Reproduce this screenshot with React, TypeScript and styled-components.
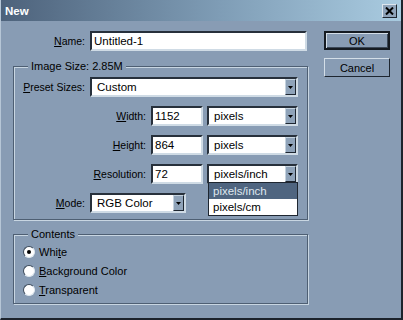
import React from "react";
import styled, { createGlobalStyle } from "styled-components";

const GlobalStyle = createGlobalStyle`
    html, body {
        margin: 0;
        padding: 0;
        background: #889cb4;
    }
    body {
        font-family: "Liberation Sans", Arial, sans-serif;
        font-size: 10.5px;
        color: #000;
    }
`;

const Window = styled.div`
    box-sizing: border-box;
    width: 403px;
    height: 320px;
    background: #889cb4;
    border-left: 1px solid #b6c6d6;
    border-right: 2px solid #1c232c;
    border-bottom: 2px solid #1c232c;
    display: flex;
    flex-direction: column;
    overflow: hidden;
`;

const TitleBar = styled.div`
    height: 21px;
    flex: none;
    display: flex;
    align-items: center;
    justify-content: space-between;
    padding: 0 4px 0 4px;
    background: linear-gradient(to right, #4d627b 0%, #7f9db6 55%, #a9cbe0 100%);
`;

const TitleText = styled.span`
    color: #fff;
    font-weight: bold;
    font-size: 11.5px;
`;

const CloseBtn = styled.div`
    box-sizing: border-box;
    width: 15px;
    height: 14px;
    background: #8fa3b9;
    border: 1px solid;
    border-color: #dde6ee #1e2630 #1e2630 #dde6ee;
    display: flex;
    align-items: center;
    justify-content: center;
`;

const Body = styled.div`
    display: flex;
    padding: 10px 0 0 12px;
    gap: 16px;
`;

const LeftCol = styled.div`
    width: 295px;
    display: flex;
    flex-direction: column;
`;

const RightCol = styled.div`
    display: flex;
    flex-direction: column;
    gap: 8px;
`;

const NameRow = styled.div`
    display: grid;
    grid-template-columns: 73px 217px;
    column-gap: 4px;
    align-items: center;
    height: 20px;
`;

const Label = styled.span<{ $span?: string }>`
    text-align: right;
    white-space: nowrap;
    padding-right: 1px;
    grid-column: ${(p) => p.$span || "auto"};
`;

const Key = styled.span`
    text-decoration: underline;
    text-underline-offset: 1px;
`;

const Sunken = styled.div`
    box-sizing: border-box;
    height: 20px;
    background: #fff;
    border: 2px solid;
    border-color: #27303b #cfdbe5 #cfdbe5 #27303b;
    display: flex;
    align-items: center;
    padding-left: 2px;
    font-size: 11.5px;
    white-space: nowrap;
`;

const Input = styled(Sunken)<{ $span?: string }>`
    grid-column: ${(p) => p.$span || "auto"};
`;

const SelectBox = styled(Sunken)<{ $span?: string; $width?: number }>`
    position: relative;
    padding-right: 0;
    justify-content: space-between;
    grid-column: ${(p) => p.$span || "auto"};
    ${(p) => (p.$width ? `width: ${p.$width}px; justify-self: start;` : "")}
`;

const SelectText = styled.span`
    padding-left: 3px;
`;

const ArrowBtn = styled.div`
    box-sizing: border-box;
    width: 11px;
    height: 16px;
    background: #8fa3b9;
    border: 1px solid;
    border-color: #c4d2de #1e2630 #1e2630 #c4d2de;
    display: flex;
    align-items: center;
    justify-content: center;
`;

const DropList = styled.div`
    position: absolute;
    top: 100%;
    left: -1px;
    right: -2px;
    box-sizing: border-box;
    border: 1px solid #1e2630;
    background: #fff;
    z-index: 2;
`;

const DropItem = styled.div<{ $active?: boolean }>`
    height: 16px;
    line-height: 16px;
    padding-left: 4px;
    font-size: 11.5px;
    background: ${(p) => (p.$active ? "#4f6580" : "#fff")};
    color: ${(p) => (p.$active ? "#dfe7ef" : "#000")};
`;

const Group = styled.div<{ $top: number }>`
    position: relative;
    margin-top: ${(p) => p.$top}px;
    border: 1px solid #4e5f73;
    box-shadow: inset 1px 1px 0 #c8d6e2, 1px 1px 0 #c8d6e2;
`;

const Caption = styled.span`
    position: absolute;
    top: -7px;
    left: 14px;
    padding: 0 3px;
    background: #889cb4;
    line-height: 13px;
    font-size: 11px;
`;

const ImageGrid = styled.div`
    display: grid;
    grid-template-columns: 72px 57px 52px 91px;
    grid-auto-rows: 20px;
    column-gap: 4px;
    row-gap: 9px;
    align-items: center;
    padding: 10px 0 6px 0;
`;

const RadioList = styled.div`
    display: flex;
    flex-direction: column;
    gap: 1px;
    padding: 8px 0 4px 9px;
`;

const RadioRow = styled.label`
    height: 18px;
    display: flex;
    align-items: center;
    gap: 4px;
    font-size: 11px;
`;

const RadioDot = styled.span<{ $checked?: boolean }>`
    box-sizing: border-box;
    width: 12px;
    height: 12px;
    border-radius: 50%;
    background: #fff;
    border: 1px solid;
    border-color: #3c4a5a #dfe8ef #dfe8ef #3c4a5a;
    display: flex;
    align-items: center;
    justify-content: center;
    &::after {
        content: "";
        width: 4px;
        height: 4px;
        border-radius: 50%;
        background: ${(p) => (p.$checked ? "#000" : "transparent")};
    }
`;

const Button = styled.div<{ $default?: boolean }>`
    box-sizing: border-box;
    width: 66px;
    height: 19px;
    display: flex;
    align-items: center;
    justify-content: center;
    font-size: 11px;
    background: #889cb4;
    border: 1px solid;
    border-color: #d3dee8 #1e2630 #1e2630 #d3dee8;
    ${(p) =>
        p.$default
            ? `border: 2px solid #151b22; box-shadow: inset 1px 1px 0 #d3dee8, inset -1px -1px 0 #3b4858;`
            : ""}
`;

function Arrow() {
    return (
        <ArrowBtn>
            <svg width="5" height="3" viewBox="0 0 5 3">
                <path d="M0 0 H5 L2.5 3 Z" fill="#000" />
            </svg>
        </ArrowBtn>
    );
}

export default function App() {
    return (
        <>
            <GlobalStyle />
            <Window>
                <TitleBar>
                    <TitleText>New</TitleText>
                    <CloseBtn>
                        <svg width="9" height="8" viewBox="0 0 9 8">
                            <path d="M1 0.5 L8 7.5 M8 0.5 L1 7.5" stroke="#000" strokeWidth="2" />
                        </svg>
                    </CloseBtn>
                </TitleBar>
                <Body>
                    <LeftCol>
                        <NameRow>
                            <Label>
                                <Key>N</Key>ame:
                            </Label>
                            <Input>Untitled-1</Input>
                        </NameRow>

                        <Group $top={15}>
                            <Caption>Image Size: 2.85M</Caption>
                            <ImageGrid>
                                <Label>
                                    <Key>P</Key>reset Sizes:
                                </Label>
                                <SelectBox $span="2 / 5">
                                    <SelectText>Custom</SelectText>
                                    <Arrow />
                                </SelectBox>

                                <Label $span="1 / 3">
                                    <Key>W</Key>idth:
                                </Label>
                                <Input>1152</Input>
                                <SelectBox>
                                    <SelectText>pixels</SelectText>
                                    <Arrow />
                                </SelectBox>

                                <Label $span="1 / 3">
                                    <Key>H</Key>eight:
                                </Label>
                                <Input>864</Input>
                                <SelectBox>
                                    <SelectText>pixels</SelectText>
                                    <Arrow />
                                </SelectBox>

                                <Label $span="1 / 3">
                                    <Key>R</Key>esolution:
                                </Label>
                                <Input>72</Input>
                                <SelectBox>
                                    <SelectText>pixels/inch</SelectText>
                                    <Arrow />
                                    <DropList>
                                        <DropItem $active>pixels/inch</DropItem>
                                        <DropItem>pixels/cm</DropItem>
                                    </DropList>
                                </SelectBox>

                                <Label>
                                    <Key>M</Key>ode:
                                </Label>
                                <SelectBox $span="2 / 4" $width={96}>
                                    <SelectText>RGB Color</SelectText>
                                    <Arrow />
                                </SelectBox>
                            </ImageGrid>
                        </Group>

                        <Group $top={14}>
                            <Caption>Contents</Caption>
                            <RadioList>
                                <RadioRow>
                                    <RadioDot $checked />
                                    <span>
                                        Whi<Key>t</Key>e
                                    </span>
                                </RadioRow>
                                <RadioRow>
                                    <RadioDot />
                                    <span>
                                        <Key>B</Key>ackground Color
                                    </span>
                                </RadioRow>
                                <RadioRow>
                                    <RadioDot />
                                    <span>
                                        <Key>T</Key>ransparent
                                    </span>
                                </RadioRow>
                            </RadioList>
                        </Group>
                    </LeftCol>
                    <RightCol>
                        <Button $default>OK</Button>
                        <Button>Cancel</Button>
                    </RightCol>
                </Body>
            </Window>
        </>
    );
}
